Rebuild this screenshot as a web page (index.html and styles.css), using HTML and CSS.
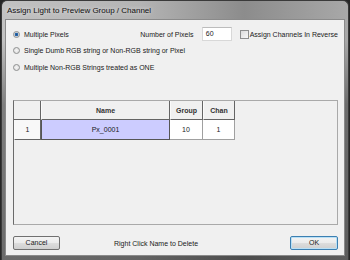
FILE: index.html
```html
<!DOCTYPE html>
<html lang="en">
<head>
  <meta charset="UTF-8" />
  <title>Assign Light to Preview Group / Channel</title>
  <link rel="stylesheet" href="styles.css">
</head>
<body>
  <div class="window">
    <div class="title-bar">Assign Light to Preview Group / Channel</div>
    <div class="client">
      <div class="options">
        <div class="row row-first">
          <label class="radio-item first-radio"><span class="radio checked"></span>Multiple Pixels</label>
          <span class="pixels-label">Number of Pixels</span>
          <span class="textbox">60</span>
          <label class="check-item"><span class="checkbox"></span>Assign Channels In Reverse</label>
        </div>
        <div class="row row-second">
          <label class="radio-item"><span class="radio"></span>Single Dumb RGB string or Non-RGB string or Pixel</label>
        </div>
        <div class="row row-third">
          <label class="radio-item"><span class="radio"></span>Multiple Non-RGB Strings treated as ONE</label>
        </div>
      </div>

      <div class="grid-panel">
        <div class="grid">
          <div class="cell head corner"></div>
          <div class="cell head">Name</div>
          <div class="cell head">Group</div>
          <div class="cell head">Chan</div>
          <div class="cell row-head">1</div>
          <div class="cell selected">Px_0001</div>
          <div class="cell">10</div>
          <div class="cell">1</div>
        </div>
      </div>

      <div class="bottom-bar">
        <button type="button" class="btn">Cancel</button>
        <span class="hint">Right Click Name to Delete</span>
        <button type="button" class="btn btn-default">OK</button>
      </div>
    </div>
  </div>
</body>
</html>
```

FILE: styles.css
```css
html, body {
  margin: 0;
  padding: 0;
}
body {
  width: 350px;
  height: 260px;
  overflow: hidden;
  background: #262626;
  font-family: "Liberation Sans", Arial, sans-serif;
  font-size: 7px;
  color: #1a1a1a;
}
.window {
  box-sizing: border-box;
  width: 348px;
  height: 260px;
  margin-left: 1px;
  padding: 0 3px 4px 3px;
  border: 1px solid #3a3a3a;
  border-bottom: none;
  border-radius: 6px 6px 0 0;
  background:
    linear-gradient(to bottom, rgba(0, 0, 0, 0) 0%, rgba(0, 0, 0, 0) 15%, rgba(0, 0, 0, 0.35) 40%, rgba(0, 0, 0, 0.45) 100%),
    linear-gradient(to right, #c2c2c2 0%, #b4b4b4 40%, #8c8c8c 70%, #a8a8a8 100%);
  display: flex;
  flex-direction: column;
}
.title-bar {
  height: 18px;
  line-height: 19px;
  padding-left: 2px;
  font-size: 8px;
  color: #101010;
  text-shadow: 0 0 4px rgba(255, 255, 255, 0.8);
}
.client {
  flex: 1;
  box-sizing: border-box;
  background: #f0f0f0;
  border: 1px solid #8a8a8a;
  padding: 7px 6px 5px 7px;
  display: flex;
  flex-direction: column;
}

/* top options */
.row {
  display: flex;
  align-items: center;
  height: 14px;
}
.row-second {
  margin-top: 2px;
}
.row-third {
  margin-top: 3px;
}
.radio-item, .check-item {
  display: flex;
  align-items: center;
  white-space: nowrap;
}
.first-radio {
  width: 128px;
}
.radio {
  box-sizing: border-box;
  width: 7px;
  height: 7px;
  margin-right: 4px;
  border-radius: 50%;
  border: 1px solid #8e8f8f;
  background: radial-gradient(circle, #f4f4f4 0%, #dcdcdc 100%);
}
.radio.checked {
  background: radial-gradient(circle, #1e4f8a 0%, #2a6bb0 40%, #dcdcdc 60%);
}
.pixels-label {
  width: 62px;
}
.textbox {
  box-sizing: border-box;
  width: 30px;
  height: 14px;
  line-height: 12px;
  padding-left: 3px;
  background: #fff;
  border: 1px solid #d8d8d8;
  border-top-color: #bcbcbc;
}
.check-item {
  margin-left: 8px;
}
.checkbox {
  box-sizing: border-box;
  width: 9px;
  height: 9px;
  margin-right: 1px;
  border: 1px solid #8e8f8f;
  background: linear-gradient(135deg, #dcdcdc, #f8f8f8);
}

/* grid */
.grid-panel {
  flex: 1;
  margin-top: 26px;
  margin-bottom: 10px;
  border: 1px solid #a9a9a9;
  border-left: 1px solid #6a6a6a;
  background: #f0f0f0;
}
.grid {
  display: grid;
  grid-template-columns: 27px 129px 33px 32px;
  grid-template-rows: 19px 20px;
}
.cell {
  box-sizing: border-box;
  display: flex;
  align-items: center;
  justify-content: center;
  background: #fff;
  border-right: 1px solid #a0a0a0;
  border-bottom: 1px solid #a0a0a0;
}
.cell.head {
  background: #f0f0f0;
  font-weight: bold;
  color: #333;
  border: 1px solid #646464;
  border-top: none;
  border-left-color: #fafafa;
}
.cell.corner {
  border-left: none;
}
.cell.row-head {
  background: #f8f8f8;
  border: 1px solid #646464;
  border-top: none;
  border-left-color: #fafafa;
}
.cell.selected {
  background: #ccccff;
  border: 1px solid #555;
  border-top: none;
}

/* bottom */
.bottom-bar {
  display: flex;
  align-items: center;
  height: 15px;
}
.btn {
  box-sizing: border-box;
  width: 47px;
  height: 14px;
  padding: 0;
  font-family: inherit;
  font-size: 7px;
  color: #1a1a1a;
  border: 1px solid #707070;
  border-radius: 2px;
  background: linear-gradient(to bottom, #f3f3f3 0%, #ebebeb 50%, #dddddd 51%, #cfcfcf 100%);
}
.btn-default {
  width: 48px;
  margin-left: auto;
  border-color: #3c7fb1;
  box-shadow: inset 0 0 0 1px #b9e0f6;
}
.hint {
  margin-left: 54px;
  margin-top: 2px;
}
```
